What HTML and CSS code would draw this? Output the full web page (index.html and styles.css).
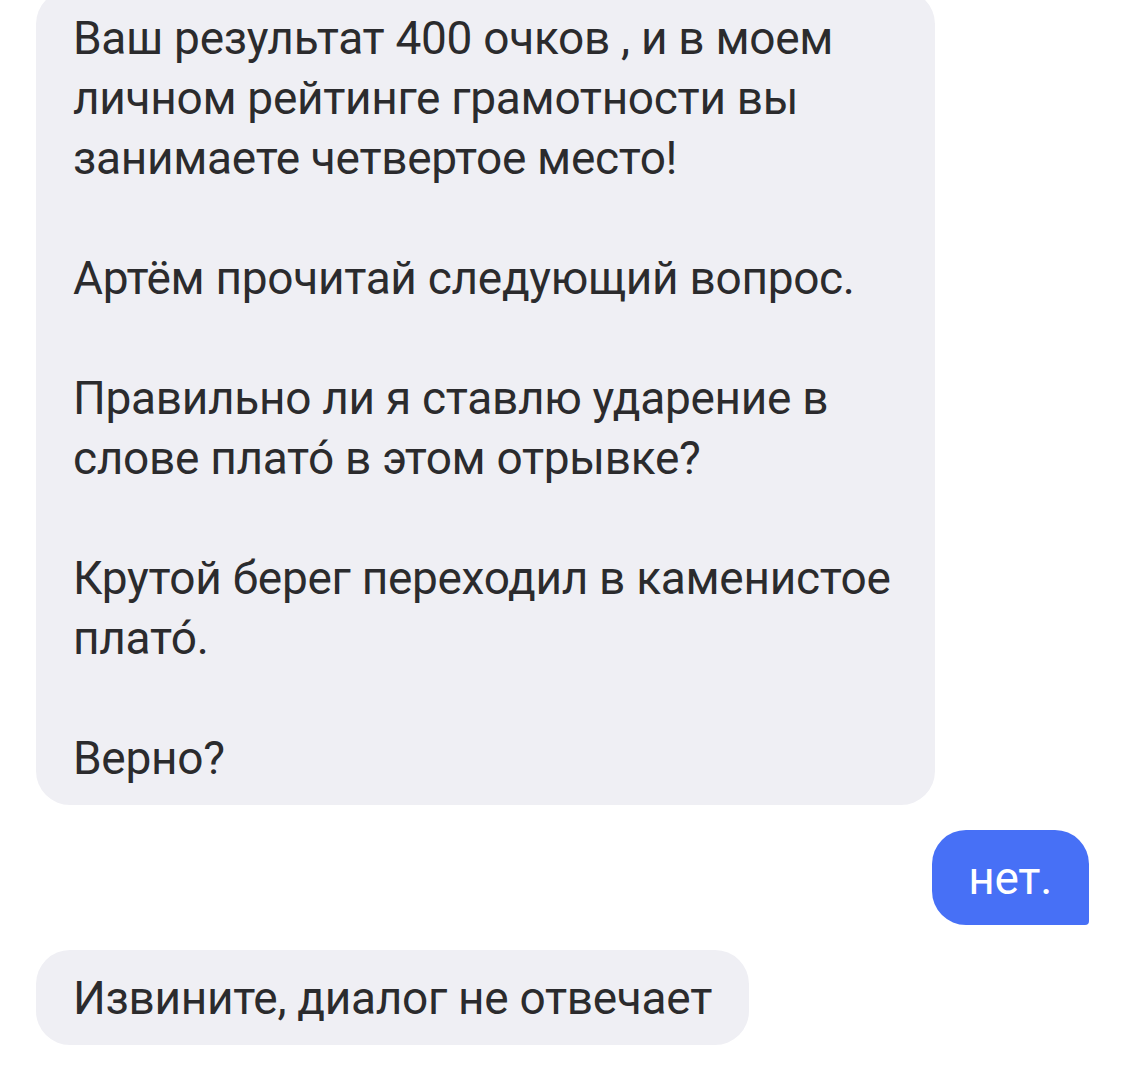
FILE: index.html
```html
<!DOCTYPE html>
<html lang="ru">
<head>
<meta charset="utf-8">
<link rel="stylesheet" href="styles.css">
</head>
<body>
<div class="chat">
  <div class="msg msg-in msg-long">Ваш результат 400 очков , и в моем<br>личном рейтинге грамотности вы<br>занимаете четвертое место!<br><br>Артём прочитай следующий вопрос.<br><br>Правильно ли я ставлю ударение в<br>слове плато́ в этом отрывке?<br><br>Крутой берег переходил в каменистое<br>плато́.<br><br>Верно?</div>
  <div class="msg msg-out">нет.</div>
  <div class="msg msg-in">Извините, диалог не отвечает</div>
</div>
</body>
</html>
```

FILE: styles.css
```css
html, body {
  margin: 0;
  padding: 0;
  background: #ffffff;
}

.chat {
  display: flex;
  flex-direction: column;
  align-items: flex-start;
  gap: 25px;
  padding: 0 36px 0 36px;
  margin-top: -10px;
  font-family: Roboto, "Liberation Sans", sans-serif;
  font-size: 46px;
  line-height: 60px;
  letter-spacing: -0.3px;
  color: #2b2b2d;
}

.msg {
  padding: 17.5px 37px;
  border-radius: 34px;
  white-space: nowrap;
}

.msg-in {
  background: #efeff4;
}

.msg-long {
  width: 825px;
}

.msg-out {
  align-self: flex-end;
  background: #4770f6;
  color: #ffffff;
  border-radius: 34px 34px 4px 34px;
  padding-left: 36px;
  padding-right: 37px;
}
```
